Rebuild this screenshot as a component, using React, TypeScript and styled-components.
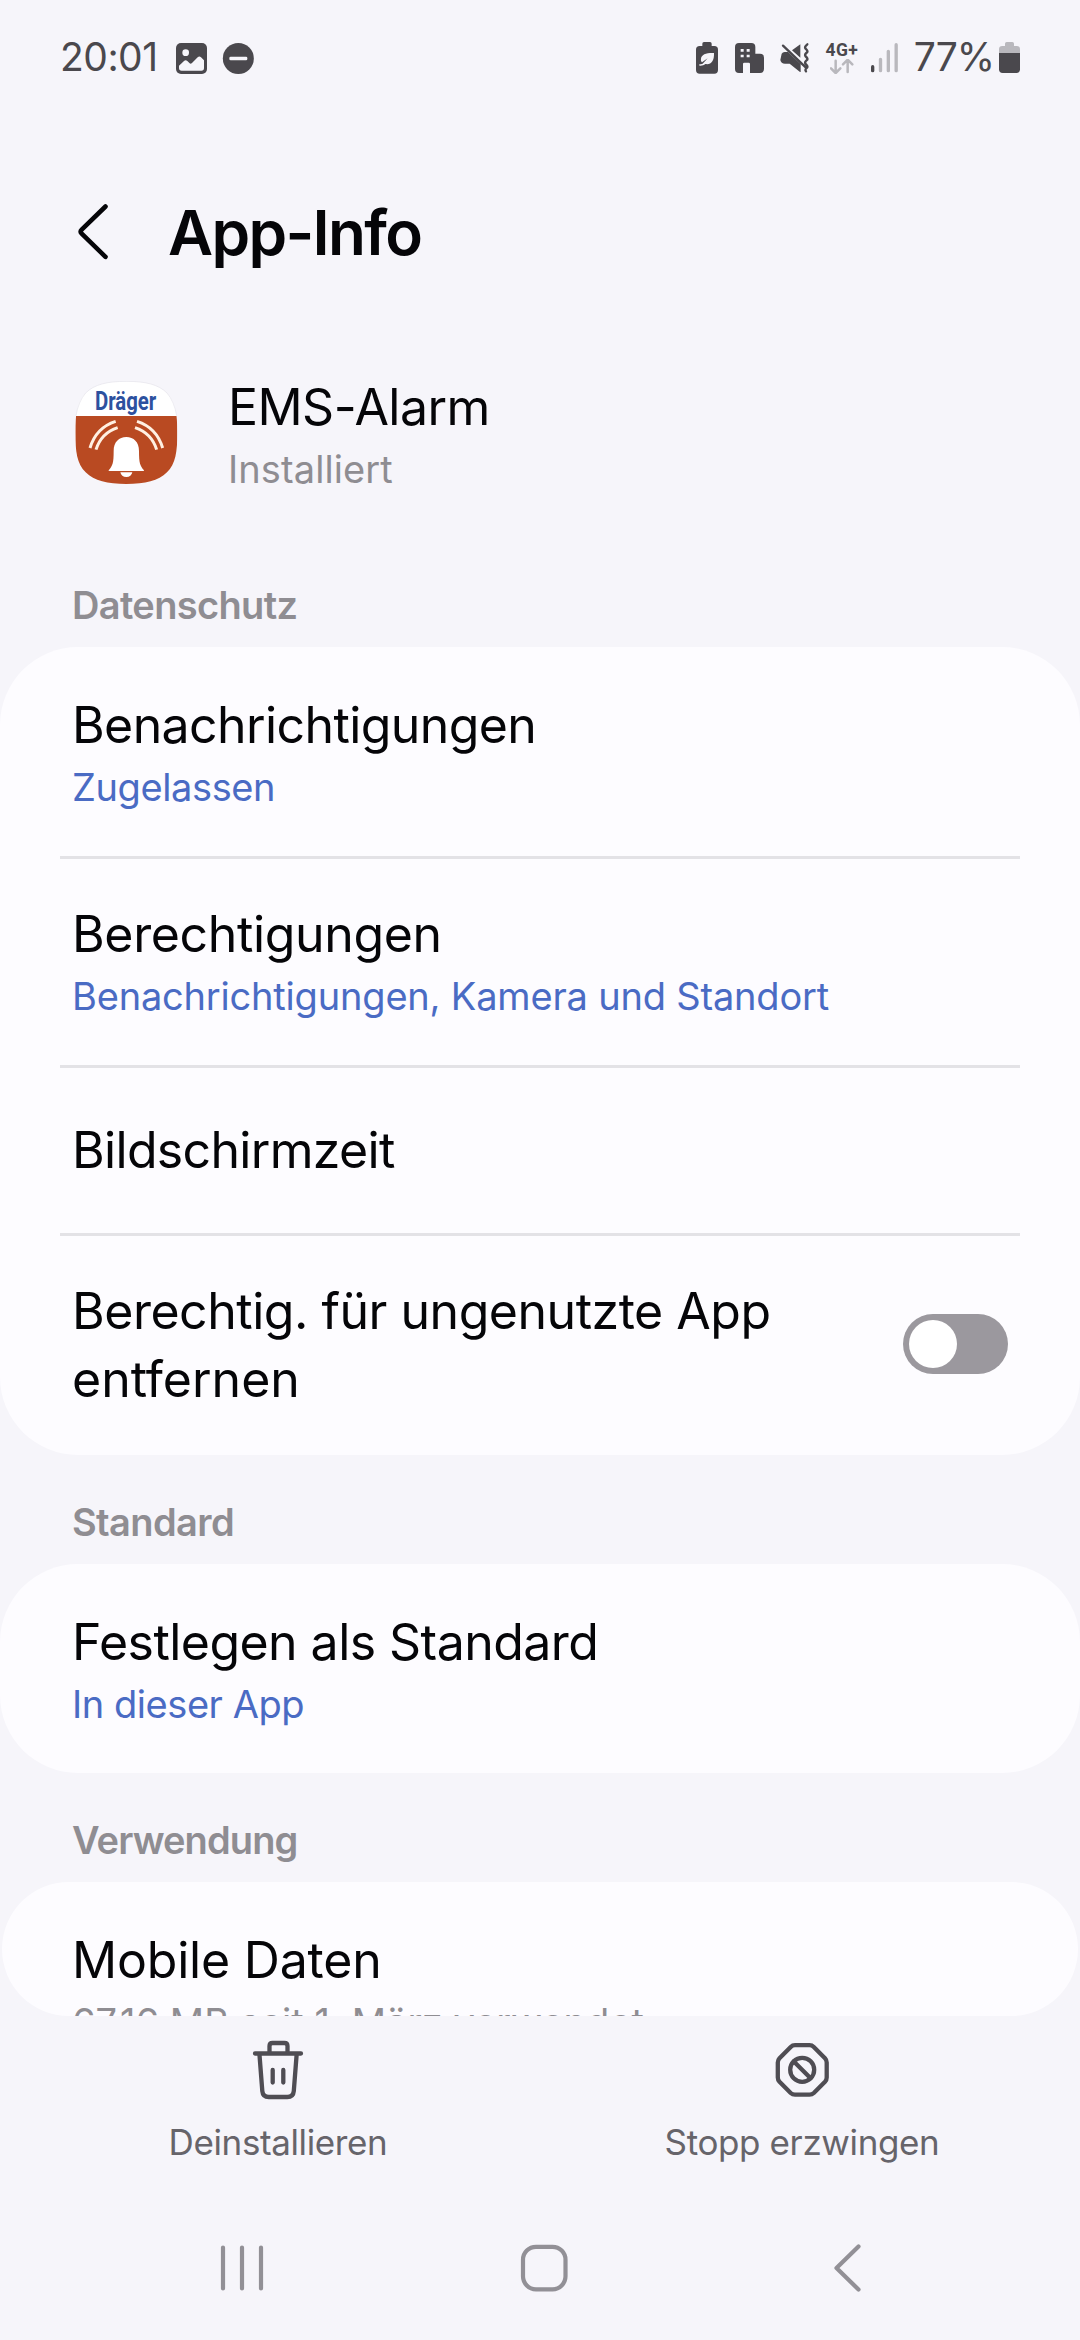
import React from "react";
import styled, { createGlobalStyle } from "styled-components";

const color = {
  page: "#f6f5fa",
  card: "#fdfcff",
  ink: "#050508",
  muted: "#8f8d92",
  link: "#4a6bc4",
  line: "#e3e2e6",
  status: "#4a484d",
  faint: "#b9b8bd",
  action: "#66646a",
  nav: "#929096",
  toggle: "#9b989e",
};

const GlobalStyle = createGlobalStyle`
  body {
    margin: 0;
    background: ${color.page};
    font-family: Inter, Roboto, sans-serif;
    font-kerning: normal;
  }
  svg { display: block; flex: none; }
`;

const Screen = styled.div`
  width: 1080px;
  height: 2340px;
  display: flex;
  flex-direction: column;
  overflow: hidden;
  background: ${color.page};
  color: ${color.ink};
`;

const ScrollArea = styled.main`
  height: 2016px;
  flex: none;
  overflow: hidden;
`;

const StatusBar = styled.header`
  height: 74px;
  padding: 33px 59px 0 60px;
  box-sizing: border-box;
  display: flex;
  justify-content: space-between;
  color: ${color.status};
  fill: ${color.status};
`;

const StatusGroup = styled.div`
  display: flex;
  align-items: flex-start;
`;

const StatusText = styled.span<{ $tracking: number; $left?: number }>`
  font-size: 39px;
  line-height: 48px;
  letter-spacing: ${(p) => p.$tracking}px;
  margin-left: ${(p) => p.$left ?? 0}px;
`;

const StatusIcon = styled.svg<{ $left: number }>`
  height: 33px;
  margin: 8px 0 0 ${(p) => p.$left}px;
`;

const Network = styled.div`
  width: 32px;
  margin: 8px 0 0 16px;
  display: flex;
  flex-direction: column;
  align-items: center;
`;

const NetworkLabel = styled.span`
  font-family: Roboto, sans-serif;
  font-size: 17.5px;
  line-height: 18px;
  font-weight: 700;
  letter-spacing: 0.3px;
`;

const TitleBar = styled.div`
  height: 80px;
  margin-top: 118px;
  padding-left: 76px;
  display: flex;
  align-items: center;
`;

const Title = styled.h1`
  margin: 2px 0 0 56px;
  font-size: 62px;
  line-height: 80px;
  font-weight: 600;
  letter-spacing: -1.7px;
`;

const AppHeader = styled.section`
  height: 165px;
  margin-top: 101px;
  padding-left: 75px;
  display: flex;
  align-items: flex-start;
`;

const AppIcon = styled.svg`
  width: 103px;
  height: 103px;
  margin: 8px 50px 0 0;
`;

const Label = styled.div<{ $tracking?: number }>`
  font-size: 50px;
  line-height: 68px;
  letter-spacing: ${(p) => p.$tracking ?? 0}px;
`;

const Detail = styled.div<{ $tracking?: number; $link?: boolean }>`
  margin-top: 3px;
  font-size: 38px;
  line-height: 50px;
  letter-spacing: ${(p) => p.$tracking ?? 0}px;
  color: ${(p) => (p.$link ? color.link : color.muted)};
  white-space: nowrap;
`;

const SectionTitle = styled.h2<{ $tracking: number }>`
  height: 109px;
  box-sizing: border-box;
  margin: 0;
  padding: 42px 72px 0;
  font-size: 38px;
  line-height: 50px;
  font-weight: 600;
  letter-spacing: ${(p) => p.$tracking}px;
  color: ${color.muted};
`;

const Card = styled.section`
  padding: 0 60px;
  border-radius: 78px;
  background: ${color.card};
`;

const ClippedCard = styled(Card)`
  height: 134px;
  margin: 0 2px;
  padding: 0 58px;
  overflow: hidden;
`;

const Row = styled.div<{ $height?: number; $top?: number }>`
  height: ${(p) => p.$height ?? 209}px;
  box-sizing: border-box;
  padding: ${(p) => p.$top ?? 0}px 12px 0;
  display: flex;
  align-items: center;
  justify-content: space-between;
  & + & {
    box-shadow: inset 0 3px ${color.line};
  }
`;

const Toggle = styled.div`
  width: 105px;
  height: 60px;
  box-sizing: border-box;
  margin-bottom: 2px;
  padding: 6px;
  border-radius: 30px;
  background: ${color.toggle};
`;

const Knob = styled.div`
  width: 48px;
  height: 48px;
  border-radius: 50%;
  background: #fff;
`;

const ActionBar = styled.footer`
  height: 184px;
  flex: none;
  box-sizing: border-box;
  padding: 24px 16px 0;
  display: grid;
  grid-template-columns: 1fr 1fr;
`;

const Action = styled.div`
  display: flex;
  flex-direction: column;
  align-items: center;
  gap: 20px;
  color: ${color.action};
  font-size: 35px;
  line-height: 44px;
  letter-spacing: -0.38px;
`;

const ActionIcon = styled.svg`
  width: 60px;
  height: 60px;
  fill: none;
  stroke: #4f4d53;
  stroke-width: 4.3px;
  stroke-linecap: round;
  stroke-linejoin: round;
`;

const NavBar = styled.nav`
  height: 136px;
  padding: 0 82px 4px 91px;
  display: grid;
  grid-template-columns: repeat(3, 302px);
  align-items: center;
  justify-items: center;
`;

const NavIcon = styled.svg`
  width: 50px;
  height: 50px;
  fill: none;
  stroke: ${color.nav};
  stroke-width: 4.2px;
  stroke-linecap: round;
  stroke-linejoin: round;
`;

function StatusIcons() {
  return (
    <StatusGroup>
      <StatusIcon $left={0} width="24" viewBox="72 63 72 99">
        <path d="M94 78V71q0-5 5-5h18q5 0 5 5v7h8q11 0 11 11v61q0 11-11 11H86q-11 0-11-11V89q0-11 11-11z" />
        <path
          d="M129 99c-22-1-38 4-39 17-1 6 1 9 3 11l17-12-15 16c-4 1-7 2-9 2-2 1-2 3 0 4 7 1 12-2 17-5 17 3 27-8 26-33z"
          fill={color.page}
        />
      </StatusIcon>
      <StatusIcon $left={15} width="31" viewBox="189 63 93 99">
        <path d="M204 69h37q12 0 12 12v20h14q12 0 12 12v34q0 12-12 12h-30v-27q0-4-4-4h-13q-4 0-4 4v27h-12q-12 0-12-12V81q0-12 12-12z" />
        <path d="M209 87h9v8h-9zM227 87h9v8h-9zM209 104h9v8h-9zM227 104h9v8h-9z" fill={color.page} />
      </StatusIcon>
      <StatusIcon $left={15} width="30" viewBox="327 63 90 99">
        <path d="M388 73v40l-25-22zM332 101q3-5 9-5h10l38 36v23q0 2-2 1l-31-25h-14q-12 0-14-11z" />
        <path
          d="M336 77l68 65M409 73q-9 7-6 12 8 7 6 11-9 7-6 12 8 7 6 11-9 7-6 12 8 7 6 11-9 7-4 12"
          fill="none"
          stroke={color.status}
          strokeWidth="7"
          strokeLinecap="round"
          strokeLinejoin="round"
        />
      </StatusIcon>
      <Network>
        <NetworkLabel>4G+</NetworkLabel>
        <svg width="24" height="15" viewBox="478 119 72 45" fill="none" stroke={color.faint} strokeWidth="7.5" strokeLinecap="round" strokeLinejoin="round">
          <path d="M495 124v36M481 147l14 14 14-14M531 158v-36M517 135l14-14 14 14" />
        </svg>
      </Network>
      <StatusIcon $left={12} width="29" viewBox="597 63 87 99" strokeWidth="10" strokeLinecap="round">
        <path d="M605 140v12" stroke={color.status} />
        <path d="M628.500 118v34M652 94v58M675.500 74v78" stroke={color.faint} />
      </StatusIcon>
      <StatusText $tracking={-1} $left={15}>77%</StatusText>
      <StatusIcon $left={4} width="23" viewBox="984 63 69 99">
        <path d="M1005 78v-7q0-5 5-5h17q5 0 5 5v7h8q10 0 10 10v14h-63V88q0-10 10-10z" fill={color.faint} />
        <path d="M987 99h63v49q0 11-11 11h-41q-11 0-11-11z" />
      </StatusIcon>
    </StatusGroup>
  );
}

function DraegerIcon() {
  return (
    <AppIcon viewBox="74 63 309 309">
      <defs>
        <clipPath id="squircle">
          <path d="M228 64c57 0 96 9 122 35s31 62 31 119-5 93-31 119-65 35-122 35-96-9-122-35-31-62-31-119 5-93 31-119 65-35 122-35z" />
        </clipPath>
      </defs>
      <g clipPath="url(#squircle)">
        <path d="M74 63h309v309H74z" fill="#fff" />
        <path d="M74 168h309v205H74z" fill="#b94a22" />
      </g>
      <path
        d="M77 167q7-42 29-68c26-26 65-35 122-35s96 9 122 35q22 26 29 68"
        fill="none"
        stroke="#e4e3ea"
        strokeWidth="2"
      />
      <text
        x="134"
        y="150"
        fontFamily="Roboto, sans-serif"
        fontWeight="700"
        fontSize="80"
        textLength="184"
        lengthAdjust="spacingAndGlyphs"
        fill="#2d519f"
      >
        Dräger
      </text>
      <path
        d="M175 331c12-14 15-22 15-58 0-27 16-42 38-42s38 15 38 42c0 36 3 44 15 58q2 2-3 2H178q-5 0-3-2zM210 337h36q-3 14-18 14t-18-14z"
        fill="#fff"
      />
      <path
        d="M119 264q18-61 77-80M137 269q16-50 65-66M337 264q-18-61-77-80M319 269q-16-50-65-66"
        fill="none"
        stroke="#fff0e2"
        strokeWidth="9"
      />
    </AppIcon>
  );
}

export default function App() {
  return (
    <Screen>
      <GlobalStyle />
      <ScrollArea>
        <StatusBar>
          <StatusGroup>
            <StatusText $tracking={-0.5}>20:01</StatusText>
            <StatusIcon $left={17.500} width="33" viewBox="405 63 99 99">
              <rect x="408" y="69" width="93" height="93" rx="15" />
              <circle cx="437" cy="98" r="10" fill={color.page} />
              <path d="M417 137l15-14q5-4 10 0l7 7q3 3 7-1l17-17q5-5 10 0l9 9v23q0 8-8 8h-59q-8 0-8-8z" fill={color.page} />
            </StatusIcon>
            <StatusIcon $left={14} width="33" viewBox="546 63 99 99">
              <circle cx="595" cy="115.500" r="46.500" />
              <rect x="568" y="110" width="54" height="11" rx="4" fill={color.page} />
            </StatusIcon>
          </StatusGroup>
          <StatusIcons />
        </StatusBar>

        <TitleBar>
          <svg width="36" height="60" viewBox="0 0 36 60" fill="none" stroke={color.ink} strokeWidth="4.6" strokeLinecap="round" strokeLinejoin="round">
            <path d="M29.500 4.500L5.700 27.700q-2 2 0 4L29.500 54.800" />
          </svg>
          <Title>App-Info</Title>
        </TitleBar>

        <AppHeader>
          <DraegerIcon />
          <div>
            <Label $tracking={-0.55}>EMS-Alarm</Label>
            <Detail $tracking={0.1}>Installiert</Detail>
          </div>
        </AppHeader>

        <SectionTitle $tracking={-0.65}>Datenschutz</SectionTitle>
        <Card>
          <Row>
            <div>
              <Label $tracking={-0.6}>Benachrichtigungen</Label>
              <Detail $link $tracking={-0.4}>Zugelassen</Detail>
            </div>
          </Row>
          <Row>
            <div>
              <Label $tracking={-0.36}>Berechtigungen</Label>
              <Detail $link $tracking={-0.19}>Benachrichtigungen, Kamera und Standort</Detail>
            </div>
          </Row>
          <Row $height={168} $top={2}>
            <Label $tracking={-0.68}>Bildschirmzeit</Label>
          </Row>
          <Row $height={222} $top={2}>
            <div>
              <Label $tracking={-0.48}>Berechtig. für ungenutzte App</Label>
              <Label>entfernen</Label>
            </div>
            <Toggle role="switch" aria-checked={false}>
              <Knob />
            </Toggle>
          </Row>
        </Card>

        <SectionTitle $tracking={-0.6}>Standard</SectionTitle>
        <Card>
          <Row>
            <div>
              <Label $tracking={-0.55}>Festlegen als Standard</Label>
              <Detail $link $tracking={-0.45}>In dieser App</Detail>
            </div>
          </Row>
        </Card>

        <SectionTitle $tracking={-0.9}>Verwendung</SectionTitle>
        <ClippedCard>
          <Row>
            <div>
              <Label $tracking={-0.2}>Mobile Daten</Label>
              <Detail $tracking={0.03}>67,16 MB seit 1. März verwendet</Detail>
            </div>
          </Row>
        </ClippedCard>
      </ScrollArea>

      <ActionBar>
        <Action>
          <ActionIcon viewBox="247 2040 60 60">
            <path d="M268.500 2053v-7q0-3 3-3h12q3 0 3 3v7M254 2053.500h46M258.500 2055l2.800 36q.500 6 6.500 6h18.500q6 0 6.500-6l2.800-36M271.700 2070v12.500M282.300 2070v12.500" />
          </ActionIcon>
          <span>Deinstallieren</span>
        </Action>
        <Action>
          <ActionIcon viewBox="772 2040 60 60">
            <path d="M795 2045.200h14.500q2.500 0 4.300 1.800l11.200 11.200q1.700 1.800 1.700 4.300v15q0 2.500-1.700 4.300l-11.200 11.200q-1.800 1.700-4.300 1.700H795q-2.500 0-4.300-1.700l-11.200-11.200q-1.700-1.800-1.700-4.300v-15q0-2.500 1.700-4.300l11.200-11.200q1.800-1.800 4.300-1.800z" />
            <circle cx="802.200" cy="2069.800" r="12" />
            <path d="M793.800 2061.400l16.800 16.800" />
          </ActionIcon>
          <span>Stopp erzwingen</span>
        </Action>
      </ActionBar>

      <NavBar>
        <NavIcon viewBox="0 0 50 50">
          <path d="M6 4.500v41M25 4.500v41M44 4.500v41" />
        </NavIcon>
        <NavIcon viewBox="0 0 50 50">
          <rect x="4" y="3.800" width="42.500" height="42.500" rx="13" />
        </NavIcon>
        <NavIcon viewBox="0 0 50 50">
          <path d="M37.500 3.500L15.500 25l22 21.500" />
        </NavIcon>
      </NavBar>
    </Screen>
  );
}
